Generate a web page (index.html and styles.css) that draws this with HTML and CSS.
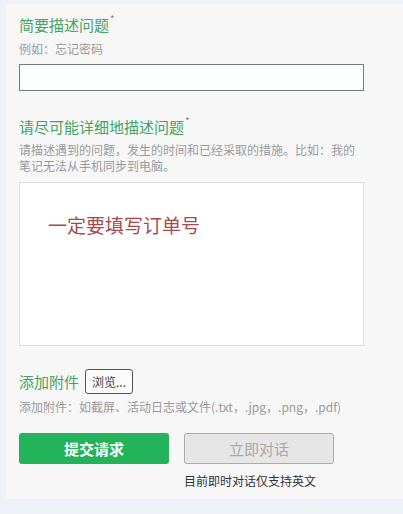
FILE: index.html
```html
<!DOCTYPE html>
<html lang="zh-CN">
<head>
    <meta charset="UTF-8">
    <title>提交请求</title>
    <link rel="stylesheet" href="styles.css">
</head>
<body>
    <div class="card">
        <div class="field-title">简要描述问题<sup>*</sup></div>
        <div class="hint">例如：忘记密码</div>
        <input class="text-input" type="text">

        <div class="field-title second">请尽可能详细地描述问题<sup>*</sup></div>
        <div class="hint multi">请描述遇到的问题，发生的时间和已经采取的措施。比如：我的笔记无法从手机同步到电脑。</div>
        <div class="text-area">
            <span class="note">一定要填写订单号</span>
        </div>

        <div class="attach-row">
            <span class="field-title">添加附件</span>
            <button class="browse-btn">浏览...</button>
        </div>
        <div class="hint">添加附件：如截屏、活动日志或文件(.txt，.jpg，.png，.pdf)</div>

        <div class="actions">
            <button class="submit-btn">提交请求</button>
            <div class="chat-col">
                <button class="chat-btn" disabled>立即对话</button>
                <div class="chat-note">目前即时对话仅支持英文</div>
            </div>
        </div>
    </div>
</body>
</html>
```

FILE: styles.css
```css
body {
    margin: 0;
    padding: 0;
    background: #eef1f8;
    font-family: "Microsoft YaHei", "Noto Sans CJK SC", sans-serif;
}

.card {
    margin: 4px 0 16px 6px;
    padding: 10px 13px 10px;
    background: #f7f7f7;
}

.field-title {
    font-size: 15px;
    line-height: 22px;
    color: #42a463;
}

.field-title sup {
    font-size: 10px;
    color: #888;
    vertical-align: 8px;
    line-height: 0;
    margin-left: 1px;
}

.field-title.second {
    margin-top: 25px;
}

.hint {
    margin-top: 4px;
    font-size: 12px;
    line-height: 18px;
    color: #9a9a9a;
}

.hint.multi {
    width: 345px;
    line-height: 16px;
}

.text-input {
    display: block;
    box-sizing: border-box;
    width: 345px;
    height: 27px;
    margin: 6px 0 0;
    border: 1px solid #6f7f78;
    background: #fdfffe;
    outline: none;
}

.text-area {
    box-sizing: border-box;
    width: 345px;
    height: 164px;
    margin-top: 8px;
    padding: 22px 0 0 28px;
    border: 1px solid #dcdcdc;
    background: #fff;
}

.note {
    font-size: 19px;
    line-height: 40px;
    color: #a84a4d;
}

.attach-row {
    display: flex;
    align-items: center;
    gap: 6px;
    margin-top: 23px;
}

.attach-row .field-title {
    line-height: 25px;
}

.browse-btn {
    height: 25px;
    padding: 0 6px;
    border: 1px solid #555;
    border-radius: 3px;
    background: #fbfbfb;
    color: #444;
    font-family: inherit;
    font-size: 12px;
}

.actions {
    display: flex;
    gap: 15px;
    margin-top: 17px;
}

.submit-btn,
.chat-btn {
    width: 150px;
    height: 31px;
    border-radius: 3px;
    font-family: inherit;
    font-size: 15px;
}

.submit-btn {
    border: none;
    background: #22b35b;
    color: #fff;
    font-weight: bold;
}

.chat-btn {
    border: 1px solid #aaa;
    background: #e6e6e6;
    color: #a8a8a8;
}

.chat-note {
    margin-top: 9px;
    font-size: 12px;
    line-height: 16px;
    color: #333;
}
```
